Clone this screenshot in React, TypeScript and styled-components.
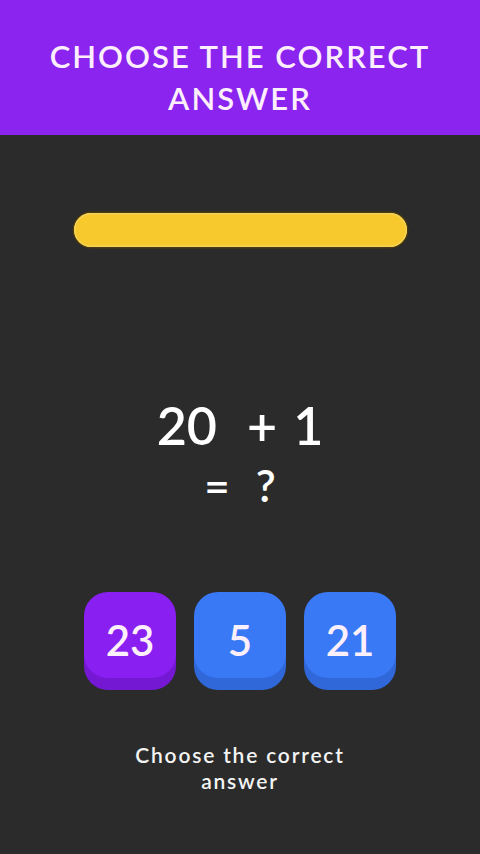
import React from 'react'
import styled, { createGlobalStyle } from 'styled-components'

const Global = createGlobalStyle`
  html, body { margin: 0; padding: 0; background: #2b2b2b; }
  body { font-family: 'Lato', 'Noto Sans', sans-serif; }
`

const Page = styled.div`
  width: 480px;
  height: 854px;
  background: #2b2b2b;
  display: flex;
  flex-direction: column;
  align-items: center;
  overflow: hidden;
`

const Header = styled.header`
  width: 100%;
  height: 135px;
  background: #8a24ee;
  display: flex;
  align-items: center;
  justify-content: center;
  box-sizing: border-box;
  padding-top: 19px;
`

const Title = styled.h1`
  margin: 0;
  color: #fdeefc;
  font-size: 31px;
  font-weight: 600;
  letter-spacing: 2px;
  line-height: 42px;
  text-align: center;
  text-transform: uppercase;
`

const Progress = styled.div`
  margin-top: 78px;
  width: 333px;
  height: 34px;
  border-radius: 17px;
  background: #f7c92d;
  box-shadow: 0 0 0 1.5px #4a3a10, inset 0 0 0 1.5px #f5d35a;
`

const Equation = styled.div`
  margin-top: 146px;
  display: flex;
  flex-direction: column;
  align-items: center;
  color: #ffffff;
  font-weight: 600;
`

const Line = styled.div<{ $size: number; $height: number }>`
  display: flex;
  align-items: center;
  justify-content: center;
  gap: 16px;
  font-size: ${p => p.$size}px;
  line-height: ${p => p.$height}px;
`

const Term = styled.span<{ $gap?: number }>`
  margin-right: ${p => p.$gap ?? 0}px;
`

const Choices = styled.div`
  margin-top: 79px;
  display: flex;
  gap: 18px;
`

const Choice = styled.button<{ $tone: 'purple' | 'blue' }>`
  width: 92px;
  height: 86px;
  border: none;
  border-radius: 24px;
  background: ${p => (p.$tone === 'purple' ? '#8a1ff1' : '#3a79f6')};
  box-shadow: 0 12px 0 ${p => (p.$tone === 'purple' ? '#7418d4' : '#3068da')};
  color: #fdf0fb;
  font-family: inherit;
  font-weight: 600;
  font-size: 42px;
  line-height: 1;
  padding: 0;
  padding-top: 27px;
  display: flex;
  align-items: flex-start;
  justify-content: center;
  box-sizing: border-box;
`

const Hint = styled.p`
  margin: 64px 0 0;
  color: #f4f4f4;
  font-size: 21px;
  font-weight: 600;
  letter-spacing: 1.8px;
  line-height: 26px;
  text-align: center;
  width: 260px;
`

export default function App() {
  return (
    <>
      <Global />
      <Page>
        <Header>
          <Title>
            Choose the correct
            <br />
            answer
          </Title>
        </Header>
        <Progress />
        <Equation>
          <Line $size={52} $height={64}>
            <Term $gap={14}>20</Term>
            <Term>+</Term>
            <Term>1</Term>
          </Line>
          <Line $size={44} $height={56}>
            <Term $gap={10}>=</Term>
            <Term>?</Term>
          </Line>
        </Equation>
        <Choices>
          <Choice $tone="purple">23</Choice>
          <Choice $tone="blue">5</Choice>
          <Choice $tone="blue">21</Choice>
        </Choices>
        <Hint>
          Choose the correct
          <br />
          answer
        </Hint>
      </Page>
    </>
  )
}
